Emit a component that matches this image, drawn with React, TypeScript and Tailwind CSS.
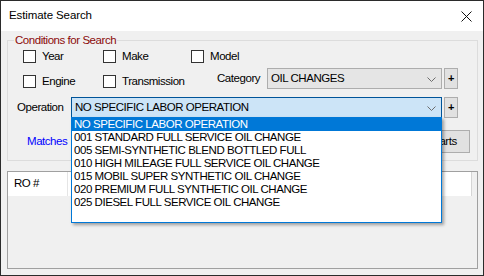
import { useState } from "react";

const operations = [
  "NO SPECIFIC LABOR OPERATION",
  "001 STANDARD FULL SERVICE OIL CHANGE",
  "005 SEMI-SYNTHETIC BLEND BOTTLED FULL",
  "010 HIGH MILEAGE FULL SERVICE OIL CHANGE",
  "015 MOBIL SUPER SYNTHETIC OIL CHANGE",
  "020 PREMIUM FULL SYNTHETIC OIL CHANGE",
  "025 DIESEL FULL SERVICE OIL CHANGE",
];

function Check({ label, width }: { label: string; width: string }) {
  return (
    <label className={`flex h-[13px] items-center ${width}`}>
      <span className="block size-[13px] shrink-0 border border-[#333333] bg-white" />
      <span className="ml-[6px] leading-[13px]">{label}</span>
    </label>
  );
}

function Chevron() {
  return (
    <svg width="9" height="5" viewBox="0 0 9 5" className="absolute right-[5px] top-[8px]">
      <path d="M0.5 0.5 L4.5 4.5 L8.5 0.5" fill="none" stroke="#6d6d6d" strokeWidth="1" />
    </svg>
  );
}

function PlusButton() {
  return (
    <button className="ml-[2px] flex h-[21px] w-[14px] items-center justify-center border border-[#adadad] bg-[#e1e1e1] text-[11px] font-bold leading-none">
      +
    </button>
  );
}

export default function App() {
  const [selected] = useState(0);

  return (
    <div className="relative h-[276px] w-[484px] overflow-hidden border border-[#2b2b2b] bg-[#f0f0f0] font-['Liberation_Sans',Arial,sans-serif] text-[11.5px] tracking-[-0.45px] text-black">
      <div className="flex h-[30px] items-center justify-between bg-white pl-[8px] pr-[11px]">
        <span className="text-[11.5px] tracking-[-0.1px]">Estimate Search</span>
        <svg width="11" height="11" viewBox="0 0 11 11">
          <path d="M0.5 0.5 L10.5 10.5 M10.5 0.5 L0.5 10.5" stroke="#111" strokeWidth="1" />
        </svg>
      </div>

      <div className="relative ml-[6px] mt-[9px] h-[121px] w-[471px] border border-[#dcdcdc]">
        <span className="absolute -top-[8px] left-[6px] bg-[#f0f0f0] px-[1px] leading-[14px] text-[#8b0a0a]">
          Conditions for Search
        </span>

        <div className="ml-[15px] mt-[9px] flex">
          <Check label="Year" width="w-[80px]" />
          <Check label="Make" width="w-[88px]" />
          <Check label="Model" width="w-[80px]" />
        </div>

        <div className="mt-[5px] flex h-[21px] items-center">
          <div className="ml-[15px] mt-[5px] flex">
            <Check label="Engine" width="w-[80px]" />
            <Check label="Transmission" width="w-[114px]" />
          </div>
          <span className="mt-[1px] w-[50px]">Category</span>
          <div className="relative flex h-[21px] w-[175px] items-center border border-[#adadad] bg-[#e5e5e5] pl-[3px]">
            OIL CHANGES
            <Chevron />
          </div>
          <PlusButton />
        </div>

        <div className="mt-[8px] flex h-[21px] items-center">
          <span className="ml-[9px] w-[54px]">Operation</span>
          <div className="relative flex h-[21px] w-[371px] items-center border border-[#005499] bg-[#cce4f7] pl-[3px]">
            NO SPECIFIC LABOR OPERATION
            <Chevron />
          </div>
          <PlusButton />
        </div>

        <div className="mt-[12px] flex h-[23px] items-center">
          <span className="ml-[19px] text-[#0000ff]">Matches</span>
          <button className="ml-auto mr-[7px] h-[23px] w-[51px] border border-[#adadad] bg-[#e1e1e1]">
            Parts
          </button>
        </div>
      </div>

      <div className="ml-[6px] mt-[10px] h-[98px] w-[471px] border border-[#a0a0a0] bg-[#f0f0f0]">
        <div className="flex h-[24px] w-[464px] border-r border-[#d5d5d5] bg-white">
          <div className="flex w-[60px] items-center border-r border-[#e5e5e5] pl-[6px]">RO #</div>
        </div>
      </div>

      <div className="absolute left-[70px] top-[116px] h-[106px] w-[371px] border border-[#0078d7] bg-white shadow-[2px_2px_3px_rgba(0,0,0,0.35)]">
        {operations.map((op, i) => (
          <div
            key={op}
            className={`h-[13px] whitespace-nowrap pl-[2px] leading-[13px] ${
              i === selected ? "bg-[#0078d7] text-white" : ""
            }`}
          >
            {op}
          </div>
        ))}
      </div>
    </div>
  );
}
